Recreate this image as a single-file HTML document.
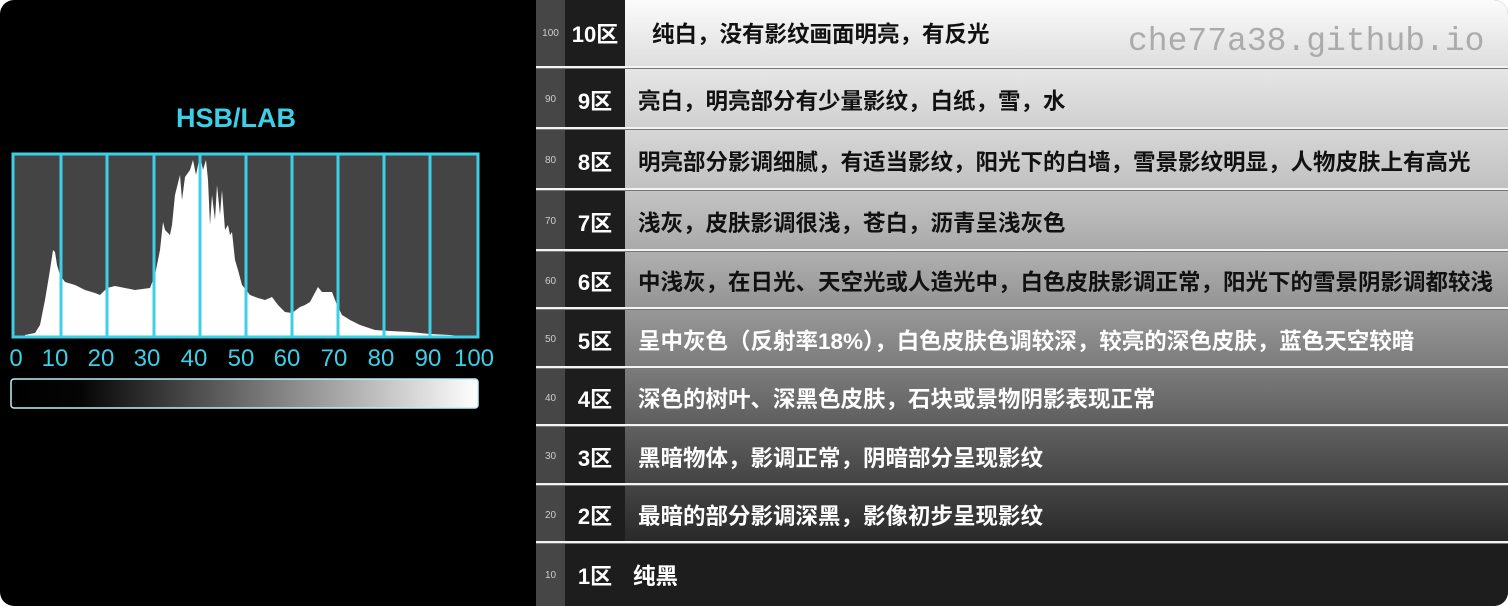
<!DOCTYPE html>
<html><head><meta charset="utf-8"><style>
html,body{margin:0;padding:0;background:#fff;}
#c{position:relative;width:1508px;height:606px;background:#000;border-radius:14px;overflow:hidden;font-family:"Liberation Sans","Noto Sans CJK SC",sans-serif;}
.row{position:absolute;left:536px;width:972px;}
.num{position:absolute;left:0;top:0;bottom:0;width:29px;background:#464646;color:#ccc;font-size:10px;display:flex;align-items:center;justify-content:center;}
.lab{position:absolute;left:29px;top:0;bottom:0;width:60px;background:#1d1d1d;color:#fff;font-size:22px;display:flex;align-items:center;justify-content:center;font-weight:bold;}
.txt{position:absolute;left:102px;top:0;bottom:0;display:flex;align-items:center;font-size:22.5px;font-weight:bold;white-space:nowrap;}
.sep{position:absolute;left:536px;width:972px;height:3px;background:#f4f4f4;border-bottom:1px solid #777;box-sizing:border-box;}
</style></head><body><div id="c">
<div style="position:absolute;left:0;top:103px;width:472px;text-align:center;color:#3dcfe6;font-size:27px;font-weight:bold;">HSB/LAB</div>
<svg style="position:absolute;left:0;top:0" width="536" height="606">
<rect x="13" y="154" width="465" height="183" fill="#444"/>
<polygon fill="#fff" points="25,337 25,335 35,333 40,325 45,300 50,270 53,250 55,252 57,265 60,275 65,282 75,285 85,290 95,293 100,295 107,288 115,286 125,288 135,290 150,288 155,275 160,250 163,222 165,230 170,235 172,225 175,195 180,175 182,200 185,177 190,170 193,160 196,175 200,155 203,170 206,160 208,180 210,225 212,195 215,220 217,185 220,215 222,190 225,230 228,225 230,235 232,232 235,260 238,270 242,285 250,295 258,298 265,300 272,297 278,305 285,312 292,313 296,310 300,307 305,305 310,302 318,287 322,292 332,292 337,305 342,315 350,320 360,325 375,330 390,331 410,332 430,334 450,335 460,336 460,337"/>
<rect x="13" y="154" width="465" height="183" fill="none" stroke="#3dcfe6" stroke-width="3"/>
<g stroke="#3dcfe6" stroke-width="3">
<line x1="61" y1="154" x2="61" y2="337"/><line x1="107" y1="154" x2="107" y2="337"/><line x1="154" y1="154" x2="154" y2="337"/><line x1="200" y1="154" x2="200" y2="337"/><line x1="246" y1="154" x2="246" y2="337"/><line x1="292" y1="154" x2="292" y2="337"/><line x1="338" y1="154" x2="338" y2="337"/><line x1="384" y1="154" x2="384" y2="337"/><line x1="430" y1="154" x2="430" y2="337"/>
</g>
<g fill="#3dcfe6" font-family="Liberation Sans" font-size="24" text-anchor="middle">
<text x="16" y="366">0</text><text x="55" y="366">10</text><text x="101" y="366">20</text><text x="147" y="366">30</text><text x="194" y="366">40</text><text x="241" y="366">50</text><text x="287" y="366">60</text><text x="334" y="366">70</text><text x="381" y="366">80</text><text x="428" y="366">90</text><text x="474" y="366">100</text>
</g>
<defs><linearGradient id="g" x1="0" x2="1"><stop offset="0" stop-color="#000"/><stop offset="0.15" stop-color="#050505"/><stop offset="1" stop-color="#fff"/></linearGradient></defs>
<rect x="11" y="379" width="467" height="29" rx="3" fill="url(#g)" stroke="#bfeff6" stroke-width="1.5"/>
</svg>

<div class="row" style="top:0;height:66px;background:linear-gradient(#fbfbfb,#dedede)"><div class="num">100</div><div class="lab">10区</div><div class="txt" style="left:116px;color:#111">纯白，没有影纹画面明亮，有反光</div>
<div style="position:absolute;left:592px;top:23px;font-family:'Liberation Mono',monospace;font-size:33px;color:#ababab;">che77a38.github.io</div></div>
<div class="sep" style="top:66px"></div>
<div class="row" style="top:69px;height:61px;background:linear-gradient(#e6e6e6,#cfcfcf)"><div class="num">90</div><div class="lab">9区</div><div class="txt" style="color:#111">亮白，明亮部分有少量影纹，白纸，雪，水</div></div>
<div class="sep" style="top:127px"></div>
<div class="row" style="top:130px;height:61px;background:linear-gradient(#d6d6d6,#c0c0c0)"><div class="num">80</div><div class="lab">8区</div><div class="txt" style="color:#111">明亮部分影调细腻，有适当影纹，阳光下的白墙，雪景影纹明显，人物皮肤上有高光</div></div>
<div class="sep" style="top:188px"></div>
<div class="row" style="top:191px;height:61px;background:linear-gradient(#c4c4c4,#a8a8a8)"><div class="num">70</div><div class="lab">7区</div><div class="txt" style="color:#111">浅灰，皮肤影调很浅，苍白，沥青呈浅灰色</div></div>
<div class="sep" style="top:249px"></div>
<div class="row" style="top:252px;height:58px;background:linear-gradient(#b0b0b0,#929292)"><div class="num">60</div><div class="lab">6区</div><div class="txt" style="color:#111">中浅灰，在日光、天空光或人造光中，白色皮肤影调正常，阳光下的雪景阴影调都较浅</div></div>
<div class="sep" style="top:307px"></div>
<div class="row" style="top:310px;height:59px;background:linear-gradient(#989898,#7a7a7a)"><div class="num">50</div><div class="lab">5区</div><div class="txt" style="color:#fff">呈中灰色（反射率18%），白色皮肤色调较深，较亮的深色皮肤，蓝色天空较暗</div></div>
<div class="sep" style="top:366px"></div>
<div class="row" style="top:369px;height:58px;background:linear-gradient(#7c7c7c,#5c5c5c)"><div class="num">40</div><div class="lab">4区</div><div class="txt" style="color:#fff">深色的树叶、深黑色皮肤，石块或景物阴影表现正常</div></div>
<div class="sep" style="top:424px"></div>
<div class="row" style="top:427px;height:59px;background:linear-gradient(#606060,#424242)"><div class="num">30</div><div class="lab">3区</div><div class="txt" style="color:#fff">黑暗物体，影调正常，阴暗部分呈现影纹</div></div>
<div class="sep" style="top:483px"></div>
<div class="row" style="top:486px;height:58px;background:linear-gradient(#444,#282828)"><div class="num">20</div><div class="lab">2区</div><div class="txt" style="color:#fff">最暗的部分影调深黑，影像初步呈现影纹</div></div>
<div class="sep" style="top:541px"></div>
<div class="row" style="top:544px;height:62px;background:#1d1d1d"><div class="num">10</div><div class="lab" style="background:transparent">1区</div><div class="txt" style="left:97px;color:#fff">纯黑</div></div>
</div></body></html>
